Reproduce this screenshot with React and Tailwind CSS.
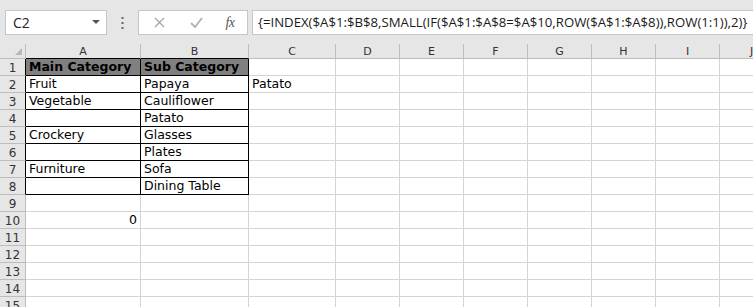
import React from 'react';

const cols = [
  { key: 'A', w: 'w-[115px]' },
  { key: 'B', w: 'w-[108px]' },
  { key: 'C', w: 'w-[87px]' },
  { key: 'D', w: 'w-[64px]' },
  { key: 'E', w: 'w-[64px]' },
  { key: 'F', w: 'w-[64px]' },
  { key: 'G', w: 'w-[64px]' },
  { key: 'H', w: 'w-[64px]' },
  { key: 'I', w: 'w-[64px]' },
  { key: 'J', w: 'w-[64px]' },
];

const data = {
  1: { A: 'Main Category', B: 'Sub Category' },
  2: { A: 'Fruit', B: 'Papaya', C: 'Patato' },
  3: { A: 'Vegetable', B: 'Cauliflower' },
  4: { B: 'Patato' },
  5: { A: 'Crockery', B: 'Glasses' },
  6: { B: 'Plates' },
  7: { A: 'Furniture', B: 'Sofa' },
  8: { B: 'Dining Table' },
  10: { A: '0' },
};

const inTable = (r, c) => r >= 1 && r <= 8 && (c === 'A' || c === 'B');

const Cell = ({ r, col }) => {
  const v = data[r] && data[r][col.key];
  const table = inTable(r, col.key);
  const head = r === 1 && table;
  return (
    <div
      className={`${col.w} shrink-0 h-[17px] border-r border-b px-[3px] pt-[1px] flex items-center overflow-visible whitespace-nowrap ${
        table ? 'border-r-black border-b-black' : 'border-r-[#d4d4d4] border-b-[#d4d4d4]'
      } ${head ? 'bg-[#808080] font-bold' : 'bg-white'} ${v === '0' ? 'justify-end' : ''}`}
    >
      {v && <span className="text-black leading-none">{v}</span>}
    </div>
  );
};

const Toolbar = () => (
  <div className="h-[44px] bg-[#e6e6e6] flex items-start pt-[10px] pl-[5px] font-['Open_Sans',sans-serif]">
    {/* name box */}
    <div className="w-[102px] h-[25px] bg-white border border-[#c6c6c6] flex items-center pl-[7px] pr-[6px] justify-between">
      <span className="text-[14px] text-[#222]">C2</span>
      <svg width="8" height="5" viewBox="0 0 8 5">
        <path d="M0 0h8L4 4z" fill="#555" />
      </svg>
    </div>
    <div className="w-[31px] h-[25px] flex items-center justify-center">
      <svg width="3" height="12" viewBox="0 0 3 12">
        <rect x="0.5" y="0" width="2" height="2" fill="#666" />
        <rect x="0.5" y="5" width="2" height="2" fill="#666" />
        <rect x="0.5" y="10" width="2" height="2" fill="#666" />
      </svg>
    </div>
    {/* formula buttons */}
    <div className="w-[110px] h-[25px] bg-white border border-[#c6c6c6] flex items-center">
      <div className="w-[40px] flex justify-center">
        <svg width="11" height="11" viewBox="0 0 11 11">
          <path d="M1 1l9 9M10 1l-9 9" stroke="#a6a6a6" strokeWidth="1.3" />
        </svg>
      </div>
      <div className="w-[34px] flex justify-center">
        <svg width="13" height="11" viewBox="0 0 13 11">
          <path d="M1 6l4 4 7-9" stroke="#b5b5b5" strokeWidth="2" fill="none" />
        </svg>
      </div>
      <div className="flex-1 flex justify-center">
        <span className="font-['Liberation_Serif',serif] italic text-[14px] text-[#555] tracking-[-0.5px]">
          fx
        </span>
      </div>
    </div>
    {/* formula input */}
    <div className="ml-[4px] flex-1 h-[25px] bg-white border border-[#c6c6c6] border-r-0 flex items-center pl-[5px] whitespace-nowrap overflow-hidden">
      <span className="text-[13.2px] text-[#1a1a1a]">
        {'{=INDEX($A$1:$B$8,SMALL(IF($A$1:$A$8=$A$10,ROW($A$1:$A$8)),ROW(1:1)),2)}'}
      </span>
    </div>
  </div>
);

export default function App() {
  const rows = Array.from({ length: 15 }, (_, i) => i + 1);
  return (
    <div className="w-[753px] h-[307px] overflow-hidden bg-white font-['DejaVu_Sans',sans-serif]">
      <Toolbar />
      {/* column header */}
      <div className="flex h-[15px] bg-[#e6e6e6]">
        <div className="w-[26px] shrink-0 border-r border-b border-[#bdbdbd] relative">
          <svg className="absolute right-[3px] bottom-[3px]" width="7" height="7" viewBox="0 0 7 7">
            <path d="M7 0v7H0z" fill="#b8b8b8" />
          </svg>
        </div>
        {cols.map((c) => (
          <div
            key={c.key}
            className={`${c.w} shrink-0 border-r border-r-[#bdbdbd] border-b ${
              c.key === 'A' || c.key === 'B' ? 'border-b-black' : 'border-b-[#bdbdbd]'
            } flex items-center justify-center text-[11px] text-[#333] leading-none`}
          >
            {c.key}
          </div>
        ))}
      </div>
      {rows.map((r) => (
        <div key={r} className="flex text-[12.5px]">
          <div
            className={`w-[26px] shrink-0 h-[17px] bg-[#e6e6e6] border-r border-b border-b-[#bdbdbd] ${
              r <= 8 ? 'border-r-black' : 'border-r-[#bdbdbd]'
            } flex items-center justify-center pt-[1px] text-[12px] text-[#333] leading-none`}
          >
            {r}
          </div>
          {cols.map((c) => (
            <Cell key={c.key} r={r} col={c} />
          ))}
        </div>
      ))}
    </div>
  );
}
